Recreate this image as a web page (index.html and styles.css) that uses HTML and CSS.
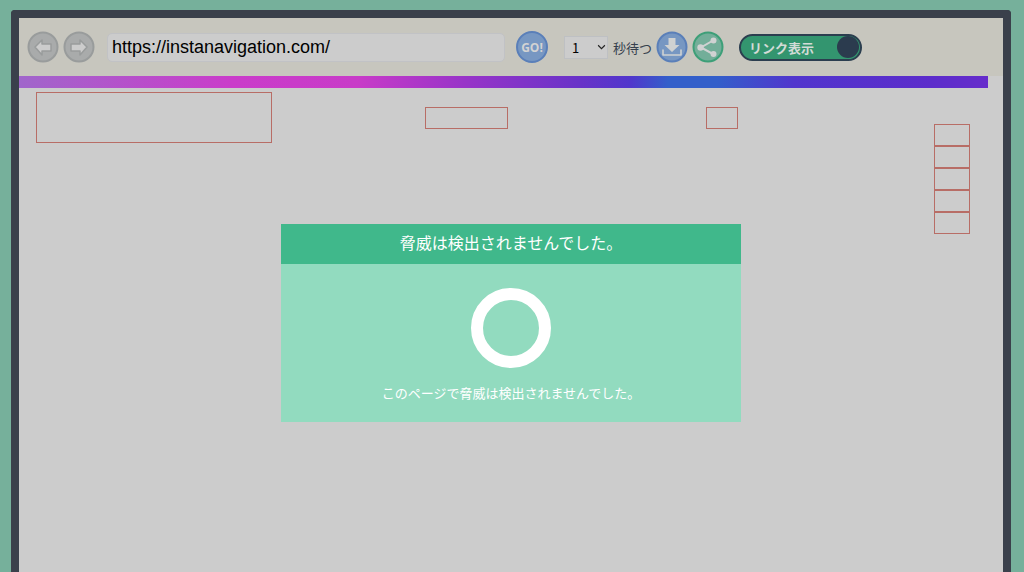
FILE: index.html
```html
<!DOCTYPE html>
<html lang="ja">
<head>
<meta charset="utf-8">
<title>リンク表示</title>
<link rel="stylesheet" href="styles.css">
</head>
<body>
<main class="frame">
  <form class="toolbar">
    <div class="group">
      <button class="round" type="button" aria-label="戻る">
        <svg viewBox="0 0 32 32"><circle class="disc gray" cx="16" cy="16" r="14.500"/><path class="arrow" d="M8 16l7-7v4h9v7h-9v4z"/></svg>
      </button>
      <button class="round" type="button" aria-label="進む">
        <svg viewBox="0 0 32 32"><circle class="disc gray" cx="16" cy="16" r="14.500"/><path class="arrow" d="M24 16l-7-7v4H8v7h9v4z"/></svg>
      </button>
    </div>
    <input class="url" type="text" aria-label="URL" value="https://instanavigation.com/">
    <button class="round go" type="button">GO!</button>
    <div class="wait">
      <span class="select-box">
        <select class="seconds" id="seconds"><option>1</option><option>2</option><option>3</option></select>
        <svg class="chevron" viewBox="0 0 8 6"><path d="M1 1l3 3 3-3"/></svg>
      </span>
      <label for="seconds">秒待つ</label>
    </div>
    <div class="group actions">
      <button class="round" type="button" aria-label="ダウンロード">
        <svg viewBox="0 0 32 32"><circle class="disc blue" cx="16" cy="16" r="14.500"/><path class="fill" d="M12.500 7h7v7h4l-7.500 7-7.500-7h4z"/><path class="line download" d="M7 19v5h18v-5"/></svg>
      </button>
      <button class="round" type="button" aria-label="共有">
        <svg viewBox="0 0 32 32"><circle class="disc green" cx="16" cy="16" r="14.500"/><path class="line" d="M21 9.500L9 16.500l12 6.500"/><circle class="fill" cx="21.500" cy="9.500" r="3"/><circle class="fill" cx="8.500" cy="16.500" r="3.200"/><circle class="fill" cx="21.500" cy="23" r="3"/></svg>
      </button>
    </div>
    <label class="toggle"><input class="toggle-input" type="checkbox" checked><span>リンク表示</span><span class="knob"></span></label>
  </form>
  <section class="page">
    <div class="banner"></div>
    <a class="spot spot-logo" href="#" aria-label="リンク 1"></a>
    <a class="spot spot-nav" href="#" aria-label="リンク 2"></a>
    <a class="spot spot-lang" href="#" aria-label="リンク 3"></a>
    <nav class="spot-list">
      <a class="item" href="#" aria-label="リンク 4"></a>
      <a class="item" href="#" aria-label="リンク 5"></a>
      <a class="item" href="#" aria-label="リンク 6"></a>
      <a class="item" href="#" aria-label="リンク 7"></a>
      <a class="item" href="#" aria-label="リンク 8"></a>
    </nav>
  </section>
  <section class="dialog" role="dialog" aria-labelledby="title">
    <h1 class="dialog-title" id="title">脅威は検出されませんでした。</h1>
    <div class="dialog-body">
      <div class="ring"></div>
      <p class="message">このページで脅威は検出されませんでした。</p>
    </div>
  </section>
</main>
</body>
</html>
```

FILE: styles.css
```css
* { box-sizing: border-box; }

body {
  margin: 0;
  min-height: 100vh;
  display: flex;
  padding: 10px 13px 0 11px;
  background: #76b09b;
  font-family: "Liberation Sans", "Noto Sans CJK JP", sans-serif;
}

.frame {
  position: relative;
  flex: 1;
  display: flex;
  flex-direction: column;
  border: 8px solid #3a404b;
  border-bottom: 0;
  border-radius: 4px 4px 0 0;
  background: #ccc;
}

.toolbar {
  display: flex;
  align-items: center;
  height: 58px;
  padding: 0 8px;
  background: #c7c6be;
}

.group { display: flex; gap: 4px; }

.round {
  width: 32px;
  height: 32px;
  padding: 0;
  border: 0;
  border-radius: 50%;
  background: none;
}

.round svg { display: block; width: 100%; height: 100%; }

.disc { stroke-width: 2; }
.gray { fill: #a9abab; stroke: #999c9c; }
.blue { fill: #7797c2; stroke: #5a7fb9; }
.green { fill: #73ae99; stroke: #3d9f78; }
.arrow { fill: #ccc; stroke: #999c9c; stroke-width: 1.5; stroke-linejoin: round; }
.fill { fill: #d0d2d2; }
.line { fill: none; stroke: #d0d2d2; stroke-width: 2; }
.download { stroke-width: 1.6; stroke-linecap: round; stroke-linejoin: round; }

.url {
  flex: 0 1 398px;
  min-width: 80px;
  height: 29px;
  margin: 0 11px 0 12px;
  padding: 0 4px;
  border: 1px solid #c1c2c5;
  border-radius: 5px;
  background: #ccc;
  color: #000;
  font: 18px/27px "Liberation Sans", sans-serif;
}

.go {
  border: 2px solid #5a7fb9;
  background: #7797c2;
  color: #d3d3d3;
  font: bold 12px "Open Sans", sans-serif;
}

.wait {
  display: flex;
  align-items: center;
  gap: 5px;
  margin: 0 4px 0 16px;
  color: #35404d;
  font-size: 13px;
  white-space: nowrap;
}

.select-box { position: relative; }

.seconds {
  display: block;
  appearance: none;
  width: 44px;
  height: 23px;
  padding: 0 7px;
  border: 1px solid #bec0c3;
  border-radius: 0;
  background: #ccc;
  color: #000;
  font: 13px "Noto Sans CJK JP", sans-serif;
}

.chevron {
  position: absolute;
  right: 2px;
  top: 8px;
  width: 9px;
  height: 7px;
  fill: none;
  stroke: #222;
  pointer-events: none;
}

.toggle {
  position: relative;
  display: flex;
  align-items: center;
  justify-content: space-between;
  width: 123px;
  height: 27px;
  margin-left: 15px;
  padding: 0 1px 0 8px;
  border: 2px solid #2b3e4f;
  border-radius: 14px;
  background: #33956f;
  color: #d3dbd7;
  font-size: 13px;
  font-weight: bold;
  white-space: nowrap;
}

.toggle-input {
  position: absolute;
  inset: 0;
  width: 100%;
  height: 100%;
  margin: 0;
  opacity: 0;
}

.knob {
  width: 22px;
  height: 22px;
  border-radius: 50%;
  background: #2b3b4e;
}

.page { position: relative; flex: 1; }

.banner {
  height: 12px;
  margin-right: 15px;
  background: linear-gradient(95deg, #a066cb, #ca3cca 22%, #c83bc8 35%, #9834c8 46%, #6832c8 58%, #5136cc 63%, #335fca 67%, #335fca 72%, #5135cd 80%, #5c2ccb 94%, #662ccb);
}

.spot, .item { display: block; border: 1px solid #b86d66; }
.spot { position: absolute; }
.spot-logo { left: 17px; top: 16px; width: 236px; height: 51px; }
.spot-nav { left: 406px; top: 31px; width: 83px; height: 22px; }
.spot-lang { left: 687px; top: 31px; width: 32px; height: 22px; }

.spot-list {
  position: absolute;
  right: 33px;
  top: 48px;
  width: 36px;
}

.item { height: 22px; }

.dialog {
  position: absolute;
  top: 206px;
  left: 50%;
  width: 460px;
  max-width: 100%;
  transform: translateX(-50%);
  background: #92dbbf;
  color: #fff;
  text-align: center;
}

.dialog-title {
  margin: 0;
  background: #40b88b;
  font-size: 16px;
  font-weight: 400;
  line-height: 40px;
}

.dialog-body {
  display: flex;
  flex-direction: column;
  align-items: center;
  gap: 16px;
  padding: 24px 20px 18px;
}

.ring {
  width: 80px;
  height: 80px;
  border: 12px solid #fff;
  border-radius: 50%;
}

.message {
  margin: 0;
  font-size: 13px;
  line-height: 20px;
}
```
